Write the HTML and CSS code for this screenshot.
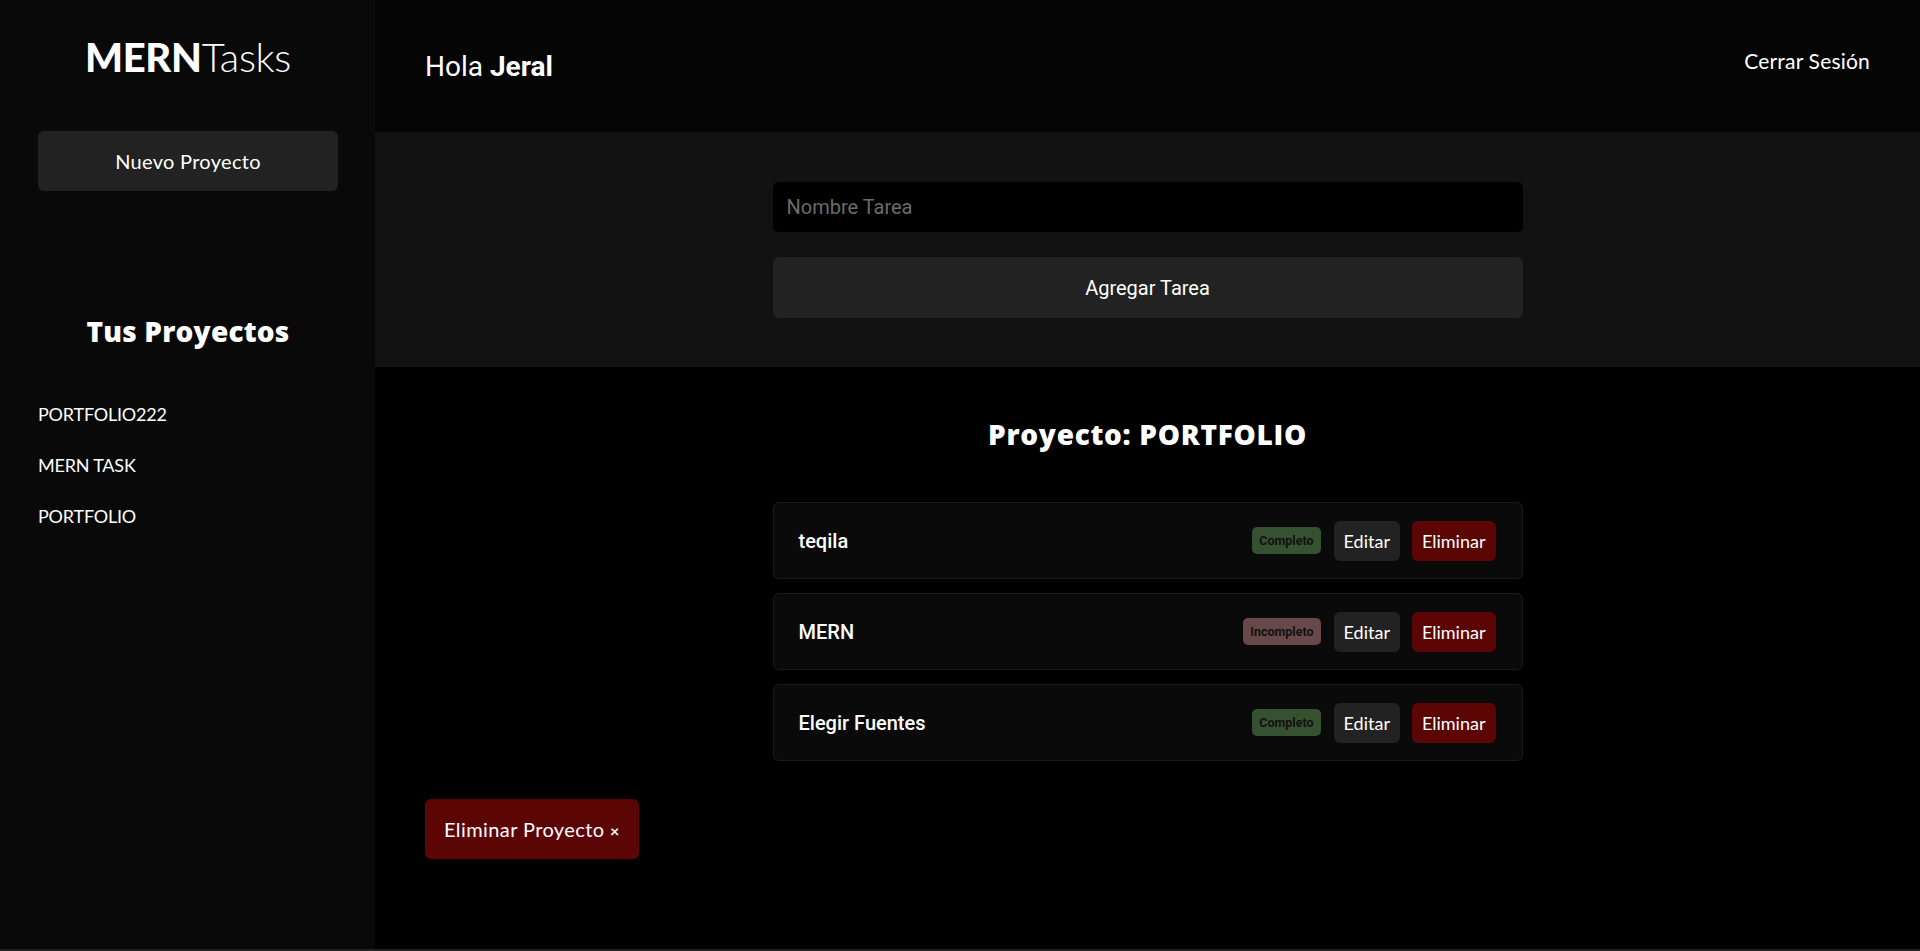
FILE: index.html
```html
<!DOCTYPE html>
<html lang="es">
<head>
<meta charset="utf-8">
<title>MERNTasks</title>
<link rel="stylesheet" href="styles.css">
</head>
<body>
<div class="app">
  <aside class="sidebar">
    <h1 class="logo"><span class="logo-bold">MERN</span>Tasks</h1>
    <button class="btn-new">Nuevo Proyecto</button>
    <h2 class="side-title">Tus Proyectos</h2>
    <ul class="project-list">
      <li>PORTFOLIO222</li>
      <li>MERN TASK</li>
      <li>PORTFOLIO</li>
    </ul>
  </aside>
  <div class="main">
    <header class="topbar">
      <p class="greeting">Hola <strong>Jeral</strong></p>
      <a class="logout">Cerrar Sesión</a>
    </header>
    <section class="form-panel">
      <form class="task-form">
        <input class="task-input" type="text" placeholder="Nombre Tarea">
        <button class="btn-add" type="button">Agregar Tarea</button>
      </form>
    </section>
    <section class="content">
      <h2 class="project-title">Proyecto: PORTFOLIO</h2>
      <ul class="task-list">
        <li class="task">
          <span class="task-name">teqila</span>
          <div class="task-actions">
            <span class="badge badge-done">Completo</span>
            <button class="btn-edit">Editar</button>
            <button class="btn-del">Eliminar</button>
          </div>
        </li>
        <li class="task">
          <span class="task-name">MERN</span>
          <div class="task-actions">
            <span class="badge badge-todo">Incompleto</span>
            <button class="btn-edit">Editar</button>
            <button class="btn-del">Eliminar</button>
          </div>
        </li>
        <li class="task">
          <span class="task-name">Elegir Fuentes</span>
          <div class="task-actions">
            <span class="badge badge-done">Completo</span>
            <button class="btn-edit">Editar</button>
            <button class="btn-del">Eliminar</button>
          </div>
        </li>
      </ul>
      <button class="btn-del-project">Eliminar Proyecto <span class="times">×</span></button>
    </section>
  </div>
</div>
</body>
</html>
```

FILE: styles.css
```css
* { box-sizing: border-box; }
html, body { margin: 0; padding: 0; }
body {
  background: #000;
  color: #fff;
  font-family: "Lato", "Open Sans", sans-serif;
}
.app {
  display: flex;
  height: 100vh;
  border-bottom: 2px solid #222;
}
.sidebar {
  width: 375px;
  flex: 0 0 375px;
  background: #090909;
  padding: 33px 37px 0 38px;
  display: flex;
  flex-direction: column;
}
.logo {
  margin: 0;
  font-size: 40px;
  line-height: 48px;
  font-weight: 300;
  text-align: center;
  letter-spacing: -0.3px;
}
.logo-bold { font-weight: 900; }
.btn-new {
  margin-top: 50px;
  height: 60px;
  width: 300px;
  border: none;
  border-radius: 6px;
  background: #222;
  color: #fff;
  font-family: "Lato", sans-serif;
  font-size: 20px;
  letter-spacing: 0.3px;
}
.side-title {
  margin: 122px 0 0;
  font-family: "Open Sans", "Lato", sans-serif;
  font-size: 28px;
  line-height: 36px;
  font-weight: 800;
  text-align: center;
  letter-spacing: 0.2px;
}
.project-list {
  list-style: none;
  margin: 40px 0 0;
  padding: 0;
}
.project-list li {
  font-size: 18px;
  line-height: 51px;
  letter-spacing: -0.2px;
}
.main {
  flex: 1;
  display: flex;
  flex-direction: column;
  min-width: 0;
}
.topbar {
  height: 132px;
  flex: 0 0 132px;
  background: #050505;
  display: flex;
  align-items: center;
  justify-content: space-between;
  padding: 0 50px;
}
.greeting {
  margin: 0;
  font-family: "Roboto", sans-serif;
  font-size: 28px;
}
.greeting strong { font-weight: 700; }
.logout {
  font-size: 21px;
  padding-bottom: 12px;
  color: #fff;
  letter-spacing: 0.2px;
}
.form-panel {
  background: #121212;
  padding: 50px 0 49px;
}
.task-form {
  width: 750px;
  margin: 0 auto;
  display: flex;
  flex-direction: column;
  gap: 25px;
}
.task-input {
  height: 50px;
  border: none;
  border-radius: 6px;
  background: #000;
  padding: 0 14px;
  color: #fff;
  font-family: "Roboto", sans-serif;
  font-size: 20px;
}
.task-input::placeholder { color: #6b6b6b; }
.btn-add {
  height: 61px;
  border: none;
  border-radius: 6px;
  background: #222;
  color: #fff;
  font-family: "Roboto", sans-serif;
  font-size: 20px;
}
.content {
  padding: 50px 50px 0;
}
.project-title {
  margin: 0;
  font-family: "Open Sans", "Lato", sans-serif;
  font-size: 28px;
  line-height: 35px;
  font-weight: 800;
  text-align: center;
  letter-spacing: 0.7px;
}
.task-list {
  list-style: none;
  margin: 50px auto 0;
  padding: 0;
  width: 750px;
  display: flex;
  flex-direction: column;
  gap: 14px;
}
.task {
  height: 77px;
  display: flex;
  align-items: center;
  justify-content: space-between;
  padding: 0 26px 0 25px;
  background: #0a0a0a;
  border: 1px solid #1a1a1a;
  border-radius: 6px;
}
.task-name {
  font-family: "Roboto", sans-serif;
  font-size: 20px;
  font-weight: 500;
}
.task-actions {
  display: flex;
  align-items: center;
  gap: 12px;
}
.badge {
  height: 27px;
  display: inline-flex;
  align-items: center;
  padding: 0 7px;
  margin-right: 1px;
  border-radius: 5px;
  font-family: "Roboto", sans-serif;
  font-size: 12.5px;
  font-weight: 700;
  color: #121212;
}
.badge-done { background: #36512f; }
.badge-todo { background: #684848; }
.btn-edit, .btn-del {
  height: 40px;
  border: none;
  border-radius: 6px;
  padding: 0 10px;
  color: #fff;
  font-family: "Lato", sans-serif;
  font-size: 18px;
}
.btn-edit { background: #222; }
.btn-del { background: #5c0505; }
.btn-del-project {
  margin-top: 38px;
  height: 60px;
  border: none;
  border-radius: 6px;
  padding: 0 19px;
  background: #5c0505;
  color: #fff;
  font-family: "Lato", sans-serif;
  font-size: 20px;
  letter-spacing: 0.4px;
}
.times { font-size: 16px; font-weight: 700; }
```
